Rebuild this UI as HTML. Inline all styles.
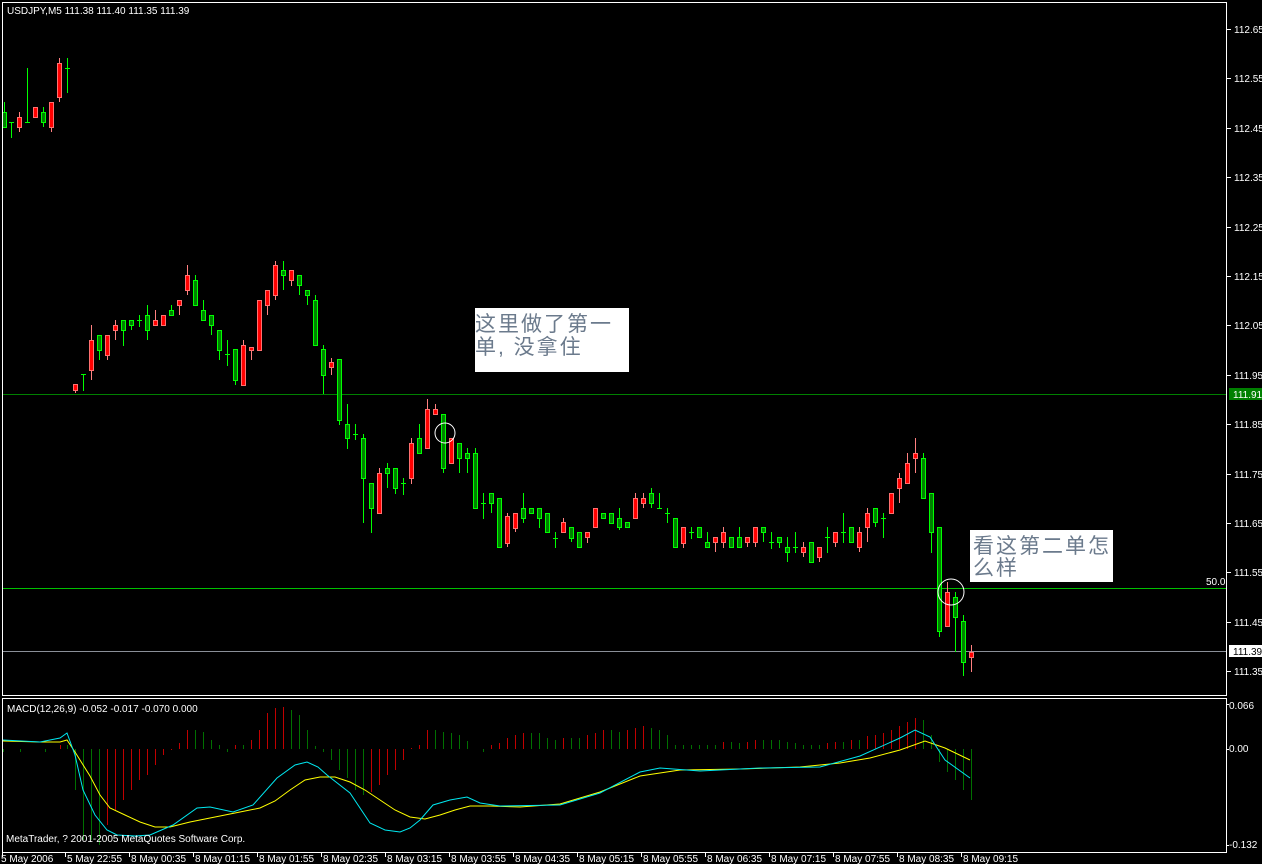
<!DOCTYPE html>
<html><head><meta charset="utf-8"><style>
html,body{margin:0;padding:0;background:#000;width:1262px;height:864px;overflow:hidden}
svg{display:block}
text{font-family:"Liberation Sans",sans-serif;font-size:10px;fill:#fff}
.cj{font-family:"Liberation Sans","Noto Sans CJK SC",sans-serif;font-size:21px;letter-spacing:2px;fill:#6b7a8c}
</style></head><body>
<svg id="s" width="1262" height="864" xmlns="http://www.w3.org/2000/svg">
<rect width="1262" height="864" fill="#000"/>
<g id="g"></g>
<rect x="2.5" y="2.5" width="1224" height="693" fill="none" stroke="#fff"/>
<rect x="2.5" y="698.5" width="1224" height="154" fill="none" stroke="#fff"/>
<text x="7" y="14">USDJPY,M5  111.38 111.40 111.35 111.39</text>
<text x="7" y="712">MACD(12,26,9) -0.052 -0.017 -0.070 0.000</text>
<text x="6" y="842">MetaTrader, ? 2001-2005 MetaQuotes Software Corp.</text>
<rect x="475" y="308" width="154" height="64" fill="#fff"/>
<text class="cj" x="475" y="331">这里做了第一</text>
<text class="cj" x="475" y="354">单, 没拿住</text>
<rect x="970" y="530" width="143" height="52" fill="#fff"/>
<text class="cj" x="973" y="553">看这第二单怎</text>
<text class="cj" x="973" y="575">么样</text>
</svg>
<script>
var g=document.getElementById('g'),h='';
function L(x1,y1,x2,y2,c){h+='<line x1="'+x1+'" y1="'+y1+'" x2="'+x2+'" y2="'+y2+'" stroke="'+c+'"/>';}
L(3,394.5,1226,394.5,'#008000');L(3,588.5,1226,588.5,'#00c000');L(3,651.5,1226,651.5,'#8a8f98');
var C=[[4,112,127,102,127,'g'],[11,122,122,122,137,'d'],[19,117,127,112,132,'r'],[27,122,122,68,122,'d'],[35,107,117,107,117,'r'],[43,112,122,107,127,'g'],[51,102,127,102,132,'r'],[59,63,97,58,102,'r'],[67,68,68,58,92,'d'],
[75,384,390,384,393,'r'],[83,374,374,374,390,'d'],[91,340,370,325,380,'r'],[99,335,350,335,360,'g'],[107,335,355,335,360,'r'],[115,325,330,320,340,'r'],[123,320,330,320,346,'g'],[131,320,325,320,330,'g'],[139,320,320,315,326,'d'],[147,315,330,305,340,'g'],[155,320,325,310,325,'r'],[163,315,325,315,325,'r'],[171,310,315,305,315,'g'],[179,300,305,300,315,'r'],[187,275,290,265,295,'r'],[195,280,305,275,305,'g'],[203,310,320,300,320,'g'],[211,315,325,315,335,'g'],[219,330,350,330,360,'g'],[227,354,354,340,365,'d'],[235,349,380,349,385,'g'],[243,345,385,340,385,'r'],[251,347,350,347,360,'r'],[259,300,350,300,350,'r'],[267,290,305,290,315,'r'],[275,265,295,261,300,'r'],[283,270,275,261,290,'g'],[291,270,280,270,286,'r'],[299,275,285,275,295,'g'],[307,290,295,290,305,'g'],[315,300,345,295,345,'g'],[323,349,375,345,394,'g'],[331,362,367,358,375,'r'],
[339,359,420,359,425,'g'],[347,424,438,404,449,'g'],[355,434,434,424,439,'d'],[363,438,478,434,523,'g'],[371,483,508,483,533,'g'],[379,473,513,468,513,'r'],[387,468,473,463,488,'g'],[395,468,488,468,494,'g'],[403,483,483,478,494,'d'],[411,443,478,438,484,'r'],[419,438,453,424,453,'g'],[427,409,448,399,448,'r'],[435,409,414,404,414,'r'],[443,414,468,414,473,'g'],[451,438,463,438,463,'r'],[459,443,458,443,473,'g'],[467,453,458,448,473,'g'],[475,453,508,448,508,'g'],[483,503,503,493,518,'d'],[491,493,503,493,513,'g'],[499,498,547,498,547,'g'],[507,516,543,513,547,'r'],[515,513,528,513,532,'r'],[523,508,518,493,523,'g'],[531,508,513,508,513,'g'],[539,508,518,508,528,'g'],[547,513,532,513,532,'g'],[555,538,538,532,547,'d'],[563,522,532,518,532,'r'],[571,527,538,527,542,'g'],[579,532,547,532,547,'g'],[587,532,537,532,543,'r'],[595,508,527,508,527,'r'],[603,513,518,513,518,'g'],[611,513,523,513,523,'g'],[619,518,527,508,530,'g'],[627,522,527,522,527,'g'],[635,498,518,493,518,'r'],[643,498,503,493,508,'r'],[651,493,503,488,508,'g'],[659,508,508,493,508,'d'],
[667,513,513,508,522,'d'],[675,518,547,518,547,'g'],[683,527,543,527,548,'r'],[691,532,532,527,538,'d'],[699,527,537,527,537,'g'],[707,542,547,532,547,'g'],[715,537,542,537,552,'r'],[723,532,542,527,548,'r'],[731,537,547,537,547,'g'],[739,537,547,527,547,'g'],[747,537,542,537,547,'r'],[755,527,542,527,547,'r'],[763,527,532,527,542,'g'],[771,542,542,532,548,'d'],[779,537,542,537,548,'g'],[787,547,552,537,562,'g'],[795,547,547,532,552,'d'],[803,547,552,542,557,'r'],[811,542,562,542,562,'g'],[819,547,557,547,562,'r'],[827,537,537,527,552,'d'],[835,532,542,532,547,'r'],[843,532,532,513,542,'d'],[851,527,542,527,542,'g'],[859,532,547,527,552,'r'],[867,513,527,508,542,'r'],[875,508,522,508,527,'g'],[883,518,518,513,537,'d'],[891,493,513,493,513,'r'],[899,478,488,473,503,'r'],[907,463,483,453,483,'r'],[915,453,458,438,473,'r'],[923,458,498,453,498,'g'],[931,493,532,493,553,'g'],[939,527,631,527,637,'g'],[947,592,626,582,626,'r'],[955,597,617,592,652,'g'],[963,621,662,615,676,'g'],[971,652,657,645,672,'r']];
C.forEach(function(c){var x=c[0],t=c[1],b=c[2],hi=c[3],lo=c[4],k=c[5];
 if(k=='d'){L(x+.5,hi,x+.5,lo+1,'#00ff00');L(x-2,t+.5,x+3,t+.5,'#00ff00');return;}
 var wc=k=='r'?'#ff8080':'#00ff00';
 L(x+.5,hi,x+.5,lo,wc);
 h+='<rect x="'+(x-1.5)+'" y="'+(t+.5)+'" width="4" height="'+Math.max(b-t,1)+'" fill="'+(k=='r'?'#ff0000':'#008000')+'" stroke="'+(k=='r'?'#ff7070':'#00ff00')+'"/>';
});
h+='<circle cx="445" cy="433" r="10" fill="none" stroke="#fff"/><circle cx="951" cy="592" r="13" fill="none" stroke="#fff"/>';
var H=[[3,752],[20,752],[45,752],[55,749],[60,745],[67,745],[75,790],[83,840],[91,840],[99,845],[107,825],[115,810],[123,800],[131,790],[139,780],[147,775],[155,765],[163,755],[171,750],[179,743],[187,730],[195,730],[203,732],[211,740],[219,745],[227,752],[235,745],[243,745],[251,740],[259,730],[267,713],[275,708],[283,707],[291,710],[299,715],[307,730],[315,746],[323,752],[331,760],[339,770],[347,778],[355,790],[363,795],[371,792],[379,785],[387,775],[395,770],[403,760],[411,748],[419,745],[427,730],[435,730],[443,732],[451,733],[459,735],[467,741],[475,749],[483,752],[491,745],[499,743],[507,738],[515,735],[523,733],[531,733],[539,733],[547,738],[555,740],[563,738],[571,738],[579,738],[587,735],[595,733],[603,730],[611,730],[619,732],[627,730],[635,728],[643,726],[651,728],[659,730],[667,735],[675,745],[683,745],[691,745],[699,745],[707,745],[715,745],[723,742],[731,742],[739,743],[747,742],[755,740],[763,740],[771,740],[779,740],[787,742],[795,743],[803,745],[811,745],[819,745],[827,743],[835,742],[843,742],[851,740],[859,740],[867,736],[875,735],[883,733],[891,730],[899,726],[907,722],[915,718],[923,720],[931,735],[939,762],[947,772],[955,780],[963,790],[971,800]];
H.forEach(function(p,i){var y=p[1];var col=(i>0&&y<H[i-1][1])?'#c00000':'#007000';L(p[0]+.5,749,p[0]+.5,y,col);});
function P(a,c){h+='<polyline fill="none" stroke="'+c+'" points="'+a.map(function(p){return p.join(',')}).join(' ')+'"/>';}
P([[3,741],[40,742],[60,742],[67,740],[75,752],[90,776],[100,795],[110,808],[125,815],[140,822],[155,827],[170,827],[190,822],[210,818],[240,812],[260,808],[275,801],[290,790],[305,780],[320,777],[335,777],[350,782],[365,790],[380,800],[395,810],[410,817],[425,819],[440,815],[455,810],[470,806],[490,806],[520,807],[560,804],[600,792],[640,776],[680,770],[740,769],[800,767],[840,763],[870,758],[900,750],[925,741],[945,748],[970,760]],'#ffff00');
P([[3,740],[40,742],[60,738],[67,733],[75,755],[83,790],[95,815],[107,830],[117,835],[135,836],[150,835],[173,825],[197,808],[210,807],[233,812],[253,805],[277,778],[295,765],[307,762],[318,767],[327,775],[350,793],[370,823],[385,830],[400,832],[410,828],[420,820],[433,805],[450,800],[467,797],[480,803],[500,806],[560,805],[600,793],[640,772],[660,768],[700,771],[760,768],[820,767],[860,756],[900,738],[915,730],[930,737],[945,760],[970,778]],'#00e8f0');
var P0=[['112.65',29],['112.55',78],['112.45',128],['112.35',177],['112.25',227],['112.15',276],['112.05',325],['111.95',375],['111.85',424],['111.75',474],['111.65',523],['111.55',572],['111.45',622],['111.35',671]];
P0.forEach(function(p){L(1227,p[1]+.5,1231,p[1]+.5,'#fff');h+='<text x="1234" y="'+(p[1]+4)+'">'+p[0]+'</text>';});
h+='<rect x="1229" y="388" width="33" height="12" fill="#008000"/><text x="1233" y="398">111.91</text>';
h+='<rect x="1229" y="645" width="33" height="12" fill="#fff"/><text x="1233" y="655" style="fill:#000">111.39</text>';
h+='<text x="1206" y="585">50.0</text>';
h+='<text x="1229" y="709">0.066</text><text x="1229" y="752">0.00</text><text x="1229" y="848">-0.132</text>';
L(1227,704.5,1229,704.5,'#fff');L(1227,749.5,1229,749.5,'#fff');L(1227,845.5,1229,845.5,'#fff');
var T=['5 May 22:55','8 May 00:35','8 May 01:15','8 May 01:55','8 May 02:35','8 May 03:15','8 May 03:55','8 May 04:35','8 May 05:15','8 May 05:55','8 May 06:35','8 May 07:15','8 May 07:55','8 May 08:35','8 May 09:15'];
h+='<text x="1" y="862">5 May 2006</text>';L(2.5,853,2.5,857,'#fff');
T.forEach(function(t,i){var x=65+64*i;L(x+.5,853,x+.5,857,'#fff');h+='<text x="'+(x+2)+'" y="862">'+t+'</text>';});
g.innerHTML=h;
</script>
</body></html>
